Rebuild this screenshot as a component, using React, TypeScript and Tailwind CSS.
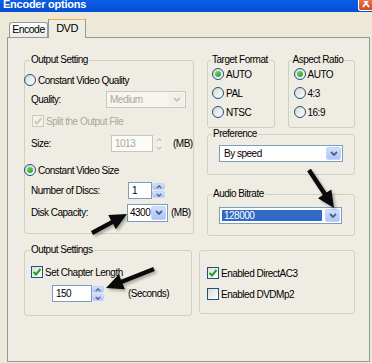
import React from 'react';

type Pt = [number, number];

// flèches noires posées par-dessus la capture
const arrowPoints = (tail: Pt, tip: Pt) => {
  const dx = tip[0] - tail[0];
  const dy = tip[1] - tail[1];
  const len = Math.hypot(dx, dy);
  const ux = dx / len;
  const uy = dy / len;
  const nx = -uy;
  const ny = ux;
  const head = 17;
  const hw = 8;
  const sw = 2.2;
  const bx = tip[0] - ux * head;
  const by = tip[1] - uy * head;
  const pts: Pt[] = [
    [tail[0] + nx * sw, tail[1] + ny * sw],
    [bx + nx * sw, by + ny * sw],
    [bx + nx * hw, by + ny * hw],
    tip,
    [bx - nx * hw, by - ny * hw],
    [bx - nx * sw, by - ny * sw],
    [tail[0] - nx * sw, tail[1] - ny * sw],
  ];
  return pts.map((p) => p.join(',')).join(' ');
};

const Arrows = () => {
  const arrows: [Pt, Pt][] = [
    [[92, 233], [127, 214]],
    [[309, 170], [334, 208]],
    [[154, 269], [106, 288]],
  ];
  return (
    <svg className="pointer-events-none absolute inset-0" width="372" height="363">
      <defs>
        <filter id="soft" x="-20%" y="-20%" width="140%" height="140%">
          <feGaussianBlur stdDeviation="1.5" />
        </filter>
      </defs>
      {arrows.map(([a, b], i) => (
        <g key={i}>
          <polygon points={arrowPoints([a[0] + 2, a[1] + 2], [b[0] + 2, b[1] + 2])} fill="#000" opacity="0.3" filter="url(#soft)" />
          <polygon points={arrowPoints(a, b)} fill="#0a0a0a" />
        </g>
      ))}
    </svg>
  );
};

const Radio = ({ checked }: { checked?: boolean }) => (
  <span className="flex h-[12px] w-[12px] shrink-0 items-center justify-center rounded-full border border-[#1C5180] bg-gradient-to-br from-[#D6D6D0] to-white">
    {checked && <span className="h-[6px] w-[6px] rounded-full bg-gradient-to-br from-[#70E46C] to-[#1E9A1E]" />}
  </span>
);

const Check = ({ checked, disabled }: { checked?: boolean; disabled?: boolean }) => (
  <span
    className={
      disabled
        ? 'flex h-[12px] w-[12px] shrink-0 items-center justify-center border border-[#CAC8BB] bg-[#F4F3EE]'
        : 'flex h-[12px] w-[12px] shrink-0 items-center justify-center border border-[#1C5180] bg-gradient-to-br from-[#DCDCD7] to-white'
    }
  >
    {checked && (
      <svg width="10" height="10" viewBox="0 0 10 10">
        <path d="M1.5 5 L4 7.5 L8.5 2" fill="none" stroke={disabled ? '#CAC8BB' : '#21A121'} strokeWidth="2" />
      </svg>
    )}
  </span>
);

const Chevron = ({ up, color = '#4D6185', w = 8 }: { up?: boolean; color?: string; w?: number }) => (
  <svg width={w} height={w / 2 + 1} viewBox="0 0 8 5">
    <path d={up ? 'M1 4 L4 1 L7 4' : 'M1 1 L4 4 L7 1'} fill="none" stroke={color} strokeWidth="1.8" />
  </svg>
);

const DropButton = ({ disabled }: { disabled?: boolean }) => (
  <span
    className={
      disabled
        ? 'm-[1px] flex w-[15px] shrink-0 items-center justify-center rounded-[2px] bg-[#F0EFE9]'
        : 'm-[1px] flex w-[15px] shrink-0 items-center justify-center rounded-[2px] border border-[#C3D3FD] bg-gradient-to-b from-[#D2DFFD] to-[#AFC4F4]'
    }
  >
    <Chevron color={disabled ? '#C9C7BA' : '#4D6185'} />
  </span>
);

const Spinner = ({ disabled, w = 'w-[12px]' }: { disabled?: boolean; w?: string }) => {
  const half = disabled
    ? 'flex flex-1 items-center justify-center rounded-[2px] bg-[#F0EFE9]'
    : 'flex flex-1 items-center justify-center rounded-[2px] border border-[#C3D3FD] bg-gradient-to-b from-[#D2DFFD] to-[#AFC4F4]';
  return (
    <span className={`flex h-[17px] ${w} shrink-0 flex-col gap-px py-px`}>
      <span className={half}>
        <Chevron up w={6} color={disabled ? '#C9C7BA' : '#4D6185'} />
      </span>
      <span className={half}>
        <Chevron w={6} color={disabled ? '#C9C7BA' : '#4D6185'} />
      </span>
    </span>
  );
};

export default function App() {
  return (
    <div className="relative h-[363px] w-[372px] overflow-hidden bg-[#ECE9D8] font-['Liberation_Sans',Arial,sans-serif] text-[10px] tracking-[-0.5px] text-black">
      {/* barre de titre, coupée en haut */}
      <div className="flex h-[12px] items-start justify-between overflow-hidden bg-gradient-to-b from-[#0B5EE6] to-[#0550D4]">
        <span className="-mt-[1px] pl-[3px] text-[11px] leading-[11px] font-bold tracking-[-0.25px] text-white">Encoder options</span>
        <span className="flex h-[11px] w-[14px] items-end justify-center rounded-bl-[3px] border-b border-l border-white bg-gradient-to-b from-[#E8744E] to-[#CF4A1E]">
          <svg width="8" height="8" viewBox="0 0 8 8" className="mb-[1px]">
            <path d="M1 -2 L7 6 M7 -2 L1 6" stroke="#fff" strokeWidth="1.8" />
          </svg>
        </span>
      </div>

      {/* onglets */}
      <div className="mt-[7px] flex h-[18px] items-end pl-[9px]">
        <div className="flex h-[15px] w-[39px] items-center justify-center rounded-t-[3px] border border-b-0 border-[#919B9C] bg-gradient-to-b from-white to-[#ECEBE5] text-[10.5px]">
          Encode
        </div>
        <div className="relative z-10 -mb-px flex h-[19px] w-[38px] flex-col border-x border-[#919B9C] bg-[#EFEDE3]">
          <span className="h-[2px] bg-[#F4B43C]" />
          <span className="flex flex-1 items-center justify-center pb-[2px] text-[11px]">DVD</span>
        </div>
      </div>

      {/* page DVD */}
      <div className="ml-[7px] flex h-[325px] w-[363px] gap-[7px] border border-[#919B9C] bg-[#EFEDE3] pt-[17px] pl-[16px]">
        {/* colonne gauche */}
        <div className="flex w-[168px] flex-col">
          <fieldset className="h-[179px] rounded-[3px] border border-[#D0D0BF]">
            <legend className="ml-[5px] px-[1px] leading-[10px]">Output Setting</legend>
            <div className="-ml-px mt-[8px] flex h-[14px] items-center gap-[2px]">
              <Radio />
              <span>Constant Video Quality</span>
            </div>
            <div className="mt-[4px] flex h-[17px] items-center pl-[6px]">
              <span className="w-[75px]">Quality:</span>
              <span className="flex h-[17px] w-[80px] border border-[#C9C7BA] bg-[#F6F5F0]">
                <span className="flex flex-1 items-center pl-[3px] text-[#ACA899]">Medium</span>
                <DropButton disabled />
              </span>
            </div>
            <div className="mt-[7px] flex h-[12px] items-center gap-[2px] pl-[7px] text-[#ACA899]">
              <Check checked disabled />
              <span>Split the Output File</span>
            </div>
            <div className="mt-[8px] flex h-[17px] items-center pl-[6px]">
              <span className="w-[80px]">Size:</span>
              <span className="flex h-[17px] w-[42px] items-center border border-[#C9C7BA] bg-[#FBFBF8] pl-[3px] text-[#ACA899]">1013</span>
              <Spinner disabled />
              <span className="ml-[8px]">(MB)</span>
            </div>
            <div className="-ml-px mt-[11px] flex h-[14px] items-center gap-[2px]">
              <Radio checked />
              <span>Constant Video Size</span>
            </div>
            <div className="mt-[5px] flex h-[17px] items-center pl-[6px]">
              <span className="w-[97px]">Number of Discs:</span>
              <span className="flex h-[17px] w-[24px] items-center border border-[#7F9DB9] bg-white pl-[3px]">1</span>
              <Spinner w="w-[13px]" />
            </div>
            <div className="mt-[5px] flex h-[17px] items-center pl-[6px]">
              <span className="w-[96px]">Disk Capacity:</span>
              <span className="flex h-[18px] w-[41px] border border-[#7F9DB9] bg-white">
                <span className="flex flex-1 items-center pl-[2px]">4300</span>
                <DropButton />
              </span>
              <span className="ml-[3px]">(MB)</span>
            </div>
          </fieldset>

          <fieldset className="mt-[11px] h-[71px] rounded-[3px] border border-[#D0D0BF]">
            <legend className="ml-[5px] px-[1px] leading-[10px]">Output Settings</legend>
            <div className="mt-[11px] flex h-[12px] items-center gap-[2px] pl-[6px]">
              <Check checked />
              <span>Set Chapter Length</span>
            </div>
            <div className="mt-[7px] flex h-[17px] items-center pl-[27px]">
              <span className="flex h-[17px] w-[40px] items-center border border-[#7F9DB9] bg-white pl-[3px]">150</span>
              <Spinner />
              <span className="ml-[24px]">(Seconds)</span>
            </div>
          </fieldset>
        </div>

        {/* colonne droite */}
        <div className="flex w-[156px] flex-col">
          <div className="flex gap-[13px] pl-[8px]">
            <fieldset className="h-[73px] w-[68px] rounded-[3px] border border-[#D0D0BF]">
              <legend className="ml-[3px] px-[1px] leading-[10px]">Target Format</legend>
              {['AUTO', 'PAL', 'NTSC'].map((t, i) => (
                <div key={t} className={`${i === 0 ? 'mt-[3px]' : 'mt-[7px]'} flex h-[12px] items-center gap-[2px] pl-[4px]`}>
                  <Radio checked={i === 0} />
                  <span>{t}</span>
                </div>
              ))}
            </fieldset>
            <fieldset className="h-[73px] w-[68px] rounded-[3px] border border-[#D0D0BF]">
              <legend className="ml-[3px] px-[1px] leading-[10px]">Aspect Ratio</legend>
              {['AUTO', '4:3', '16:9'].map((t, i) => (
                <div key={t} className={`${i === 0 ? 'mt-[3px]' : 'mt-[7px]'} flex h-[12px] items-center gap-[2px] pl-[5px]`}>
                  <Radio checked={i === 0} />
                  <span>{t}</span>
                </div>
              ))}
            </fieldset>
          </div>

          <fieldset className="ml-[8px] mt-[1px] h-[46px] w-[148px] rounded-[3px] border border-[#D0D0BF]">
            <legend className="ml-[4px] px-[1px] leading-[10px]">Preference</legend>
            <div className="mt-[6px] pl-[11px]">
              <span className="flex h-[17px] w-[124px] border border-[#7F9DB9] bg-white">
                <span className="flex flex-1 items-center pl-[4px]">By speed</span>
                <DropButton />
              </span>
            </div>
          </fieldset>

          <fieldset className="ml-[8px] mt-[14px] h-[47px] w-[148px] rounded-[3px] border border-[#D0D0BF]">
            <legend className="ml-[4px] px-[1px] leading-[10px]">Audio Bitrate</legend>
            <div className="mt-[8px] pl-[11px]">
              <span className="flex h-[17px] w-[123px] border border-[#7F9DB9] bg-white">
                <span className="flex flex-1 items-center p-[2px]">
                  <span className="flex h-full flex-1 items-center bg-[#316AC5] pl-[2px] text-white">128000</span>
                </span>
                <DropButton />
              </span>
            </div>
          </fieldset>

          <div className="mt-[14px] h-[64px] w-[156px] rounded-[3px] border border-[#D0D0BF]">
            <div className="mt-[16px] flex h-[12px] items-center gap-[2px] pl-[7px]">
              <Check checked />
              <span>Enabled DirectAC3</span>
            </div>
            <div className="mt-[9px] flex h-[12px] items-center gap-[2px] pl-[7px]">
              <Check />
              <span>Enabled DVDMp2</span>
            </div>
          </div>
        </div>
      </div>

      <Arrows />
    </div>
  );
}
